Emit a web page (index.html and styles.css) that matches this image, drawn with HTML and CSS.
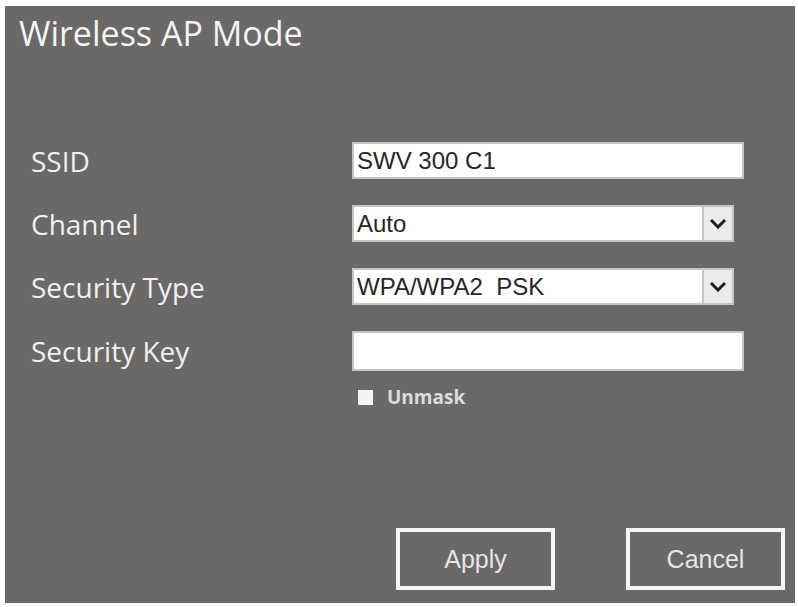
FILE: index.html
```html
<!DOCTYPE html>
<html lang="en">

<head>
    <meta charset="UTF-8">
    <meta name="viewport" content="width=device-width, initial-scale=1.0">
    <title>Wireless AP Mode</title>
    <link rel="stylesheet" href="styles.css">
</head>

<body>
    <div class="panel">
        <h1 class="title">Wireless AP Mode</h1>

        <form class="ap-form">
            <label class="field-label" for="ssid">SSID</label>
            <input class="text-input" type="text" id="ssid" value="SWV 300 C1">

            <label class="field-label" for="channel">Channel</label>
            <div class="select-box" id="channel">
                <span class="select-value">Auto</span>
                <span class="select-arrow">
                    <svg width="18" height="11" viewBox="0 0 18 11"><path d="M2 2 L9 9 L16 2" fill="none" stroke="#1e1e1e" stroke-width="3"/></svg>
                </span>
            </div>

            <label class="field-label" for="security">Security Type</label>
            <div class="select-box" id="security">
                <span class="select-value">WPA/WPA2&nbsp; PSK</span>
                <span class="select-arrow">
                    <svg width="18" height="11" viewBox="0 0 18 11"><path d="M2 2 L9 9 L16 2" fill="none" stroke="#1e1e1e" stroke-width="3"/></svg>
                </span>
            </div>

            <label class="field-label key-label" for="key">Security Key</label>
            <input class="text-input key-input" type="text" id="key">

            <span></span>
            <label class="unmask">
                <span class="check"></span>
                Unmask
            </label>
        </form>

        <div class="actions">
            <button type="button" class="btn">Apply</button>
            <button type="button" class="btn">Cancel</button>
        </div>
    </div>
</body>

</html>
```

FILE: styles.css
```css
body {
    margin: 0;
    background: #ffffff;
    font-family: "Open Sans", sans-serif;
}

.panel {
    margin: 6px 0 0 5px;
    width: 790px;
    height: 597px;
    box-sizing: border-box;
    background: #6b6868;
    padding: 6px 10px 13px 14px;
    display: flex;
    flex-direction: column;
}

.title {
    margin: 0;
    font-size: 34px;
    font-weight: 400;
    color: #f4f4f4;
    line-height: 42px;
}

.ap-form {
    margin-top: 88px;
    display: grid;
    grid-template-columns: 333px 392px;
    grid-auto-rows: 37px;
    row-gap: 26px;
    align-items: center;
}

.field-label {
    padding-left: 12px;
    font-size: 28px;
    color: #f0f0f0;
}

.text-input {
    height: 37px;
    box-sizing: border-box;
    border: 2px solid #c6c4c4;
    background: #ffffff;
    padding: 0 3px;
    font-family: "Liberation Sans", Arial, sans-serif;
    font-size: 24px;
    color: #262626;
    outline: none;
}

.key-input {
    height: 40px;
    margin-top: 3px;
}

.key-label {
    margin-top: 3px;
}

.select-box {
    width: 382px;
    height: 37px;
    box-sizing: border-box;
    border: 2px solid #c6c4c4;
    background: #ffffff;
    display: flex;
    align-items: center;
}

.select-value {
    flex: 1;
    padding-left: 3px;
    font-family: "Liberation Sans", Arial, sans-serif;
    font-size: 24px;
    color: #262626;
}

.select-arrow {
    width: 30px;
    height: 100%;
    box-sizing: border-box;
    border-left: 2px solid #c6c4c4;
    background: #ecebeb;
    display: flex;
    align-items: center;
    justify-content: center;
}

.unmask {
    align-self: start;
    margin-top: -7px;
    display: flex;
    align-items: center;
    gap: 14px;
    padding-left: 6px;
    font-size: 19px;
    font-weight: 700;
    line-height: 20px;
    color: #dcdcdc;
}

.check {
    width: 15px;
    height: 15px;
    background: #f4f4f4;
}

.actions {
    margin-top: auto;
    display: flex;
    justify-content: flex-end;
    gap: 71px;
}

.btn {
    width: 159px;
    height: 62px;
    box-sizing: border-box;
    border: 4px solid #f6f6f6;
    background: transparent;
    font-family: "Liberation Sans", Arial, sans-serif;
    font-size: 25px;
    color: #e6e6e6;
}
```
